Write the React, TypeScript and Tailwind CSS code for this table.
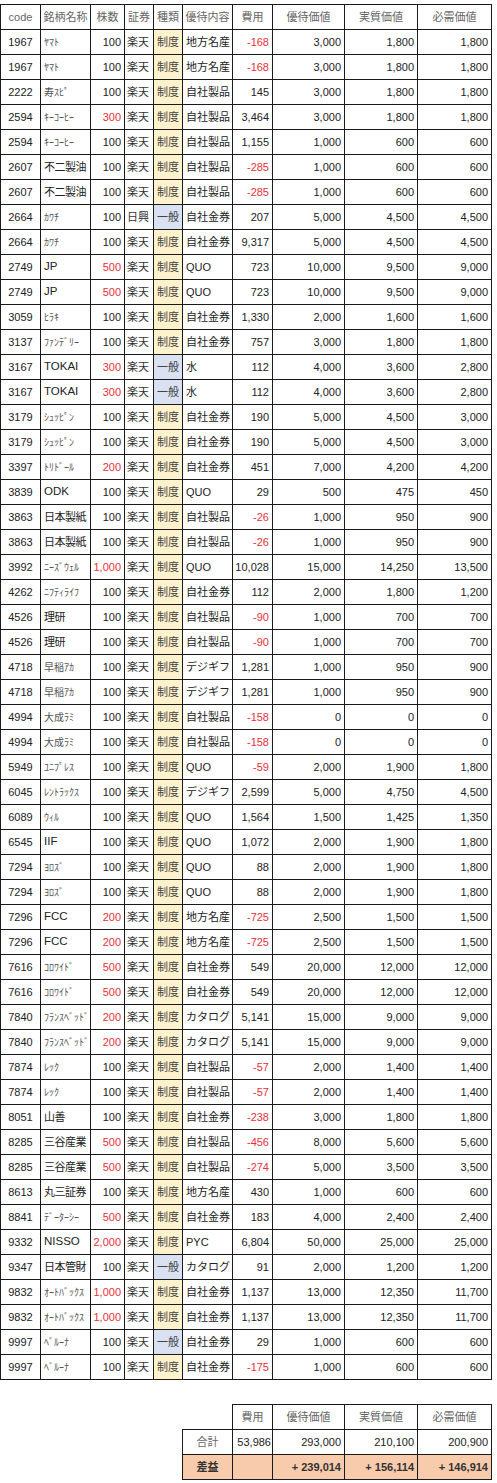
import React from "react";

type Row = [string, string, number, string, string, string, number, number, number, number];

const rows: Row[] = [
  ["1967", "ﾔﾏﾄ", 100, "楽天", "制度", "地方名産", -168, 3000, 1800, 1800],
  ["1967", "ﾔﾏﾄ", 100, "楽天", "制度", "地方名産", -168, 3000, 1800, 1800],
  ["2222", "寿ｽﾋﾟ", 100, "楽天", "制度", "自社製品", 145, 3000, 1800, 1800],
  ["2594", "ｷｰｺｰﾋｰ", 300, "楽天", "制度", "自社製品", 3464, 3000, 1800, 1800],
  ["2594", "ｷｰｺｰﾋｰ", 100, "楽天", "制度", "自社製品", 1155, 1000, 600, 600],
  ["2607", "不二製油", 100, "楽天", "制度", "自社製品", -285, 1000, 600, 600],
  ["2607", "不二製油", 100, "楽天", "制度", "自社製品", -285, 1000, 600, 600],
  ["2664", "ｶﾜﾁ", 100, "日興", "一般", "自社金券", 207, 5000, 4500, 4500],
  ["2664", "ｶﾜﾁ", 100, "楽天", "制度", "自社金券", 9317, 5000, 4500, 4500],
  ["2749", "JP", 500, "楽天", "制度", "QUO", 723, 10000, 9500, 9000],
  ["2749", "JP", 500, "楽天", "制度", "QUO", 723, 10000, 9500, 9000],
  ["3059", "ﾋﾗｷ", 100, "楽天", "制度", "自社金券", 1330, 2000, 1600, 1600],
  ["3137", "ﾌｧﾝﾃﾞﾘｰ", 100, "楽天", "制度", "自社金券", 757, 3000, 1800, 1800],
  ["3167", "TOKAI", 300, "楽天", "一般", "水", 112, 4000, 3600, 2800],
  ["3167", "TOKAI", 300, "楽天", "一般", "水", 112, 4000, 3600, 2800],
  ["3179", "ｼｭｯﾋﾟﾝ", 100, "楽天", "制度", "自社金券", 190, 5000, 4500, 3000],
  ["3179", "ｼｭｯﾋﾟﾝ", 100, "楽天", "制度", "自社金券", 190, 5000, 4500, 3000],
  ["3397", "ﾄﾘﾄﾞｰﾙ", 200, "楽天", "制度", "自社金券", 451, 7000, 4200, 4200],
  ["3839", "ODK", 100, "楽天", "制度", "QUO", 29, 500, 475, 450],
  ["3863", "日本製紙", 100, "楽天", "制度", "自社製品", -26, 1000, 950, 900],
  ["3863", "日本製紙", 100, "楽天", "制度", "自社製品", -26, 1000, 950, 900],
  ["3992", "ﾆｰｽﾞｳｪﾙ", 1000, "楽天", "制度", "QUO", 10028, 15000, 14250, 13500],
  ["4262", "ﾆﾌﾃｨﾗｲﾌ", 100, "楽天", "制度", "自社金券", 112, 2000, 1800, 1200],
  ["4526", "理研", 100, "楽天", "制度", "自社製品", -90, 1000, 700, 700],
  ["4526", "理研", 100, "楽天", "制度", "自社製品", -90, 1000, 700, 700],
  ["4718", "早稲ｱｶ", 100, "楽天", "制度", "デジギフ", 1281, 1000, 950, 900],
  ["4718", "早稲ｱｶ", 100, "楽天", "制度", "デジギフ", 1281, 1000, 950, 900],
  ["4994", "大成ﾗﾐ", 100, "楽天", "制度", "自社製品", -158, 0, 0, 0],
  ["4994", "大成ﾗﾐ", 100, "楽天", "制度", "自社製品", -158, 0, 0, 0],
  ["5949", "ﾕﾆﾌﾟﾚｽ", 100, "楽天", "制度", "QUO", -59, 2000, 1900, 1800],
  ["6045", "ﾚﾝﾄﾗｯｸｽ", 100, "楽天", "制度", "デジギフ", 2599, 5000, 4750, 4500],
  ["6089", "ｳｨﾙ", 100, "楽天", "制度", "QUO", 1564, 1500, 1425, 1350],
  ["6545", "IIF", 100, "楽天", "制度", "QUO", 1072, 2000, 1900, 1800],
  ["7294", "ﾖﾛｽﾞ", 100, "楽天", "制度", "QUO", 88, 2000, 1900, 1800],
  ["7294", "ﾖﾛｽﾞ", 100, "楽天", "制度", "QUO", 88, 2000, 1900, 1800],
  ["7296", "FCC", 200, "楽天", "制度", "地方名産", -725, 2500, 1500, 1500],
  ["7296", "FCC", 200, "楽天", "制度", "地方名産", -725, 2500, 1500, 1500],
  ["7616", "ｺﾛﾜｲﾄﾞ", 500, "楽天", "制度", "自社金券", 549, 20000, 12000, 12000],
  ["7616", "ｺﾛﾜｲﾄﾞ", 500, "楽天", "制度", "自社金券", 549, 20000, 12000, 12000],
  ["7840", "ﾌﾗﾝｽﾍﾞｯﾄﾞ", 200, "楽天", "制度", "カタログ", 5141, 15000, 9000, 9000],
  ["7840", "ﾌﾗﾝｽﾍﾞｯﾄﾞ", 200, "楽天", "制度", "カタログ", 5141, 15000, 9000, 9000],
  ["7874", "ﾚｯｸ", 100, "楽天", "制度", "自社製品", -57, 2000, 1400, 1400],
  ["7874", "ﾚｯｸ", 100, "楽天", "制度", "自社製品", -57, 2000, 1400, 1400],
  ["8051", "山善", 100, "楽天", "制度", "自社金券", -238, 3000, 1800, 1800],
  ["8285", "三谷産業", 500, "楽天", "制度", "自社製品", -456, 8000, 5600, 5600],
  ["8285", "三谷産業", 500, "楽天", "制度", "自社製品", -274, 5000, 3500, 3500],
  ["8613", "丸三証券", 100, "楽天", "制度", "地方名産", 430, 1000, 600, 600],
  ["8841", "ﾃﾞｰﾀｰｼｰ", 500, "楽天", "制度", "自社金券", 183, 4000, 2400, 2400],
  ["9332", "NISSO", 2000, "楽天", "制度", "PYC", 6804, 50000, 25000, 25000],
  ["9347", "日本管財", 100, "楽天", "一般", "カタログ", 91, 2000, 1200, 1200],
  ["9832", "ｵｰﾄﾊﾞｯｸｽ", 1000, "楽天", "制度", "自社金券", 1137, 13000, 12350, 11700],
  ["9832", "ｵｰﾄﾊﾞｯｸｽ", 1000, "楽天", "制度", "自社金券", 1137, 13000, 12350, 11700],
  ["9997", "ﾍﾞﾙｰﾅ", 100, "楽天", "一般", "自社金券", 29, 1000, 600, 600],
  ["9997", "ﾍﾞﾙｰﾅ", 100, "楽天", "制度", "自社金券", -175, 1000, 600, 600],
];

const headers = ["code", "銘柄名称", "株数", "証券", "種類", "優待内容", "費用", "優待価値", "実質価値", "必需価値"];

const fmt = (n: number) => n.toLocaleString("en-US");

const cell = "h-[25px] border-r border-b border-[#1a1a1a] flex items-center overflow-hidden whitespace-nowrap";
const red = "text-[#e8303a]";

function nameClass(name: string) {
  if (/[\uFF61-\uFF9F]/.test(name)) return "text-[10px] text-[#555]";
  if (/^[A-Za-z]+$/.test(name)) return "text-[11.5px] text-[#222]";
  return "text-[11px] tracking-[-0.5px] text-[#222]";
}

export default function App() {
  return (
    <div className="bg-white min-h-[1483px] pt-[4px] font-['Liberation_Sans','Noto_Sans_CJK_JP',sans-serif] text-[11px] text-[#222]">
      <div className="w-[492px] grid grid-cols-[40px_50px_34px_29px_29px_50px_40px_72px_73px_74px] border-t border-l border-[#1a1a1a]">
        {headers.map((h) => (
          <div key={h} className={`${cell} justify-center text-[#666] text-[11px]`}>
            {h}
          </div>
        ))}
        {rows.map((r, i) => (
          <React.Fragment key={i}>
            <div className={`${cell} justify-center`}>{r[0]}</div>
            <div className={`${cell} pl-[3px] ${nameClass(r[1])}`}>{r[1]}</div>
            <div className={`${cell} justify-end pr-[3px] ${r[2] !== 100 ? red : ""}`}>{fmt(r[2])}</div>
            <div className={`${cell} pl-[2px] text-[#333]`}>{r[3]}</div>
            <div
              className={`${cell} justify-center text-[#444] ${r[4] === "制度" ? "bg-[#fff2cc]" : "bg-[#d9e1f2]"}`}
            >
              {r[4]}
            </div>
            <div className={`${cell} pl-[3px]`}>{r[5]}</div>
            <div className={`${cell} justify-end pr-[3px] ${r[6] < 0 ? red : ""}`}>{fmt(r[6])}</div>
            <div className={`${cell} justify-end pr-[3px]`}>{fmt(r[7])}</div>
            <div className={`${cell} justify-end pr-[3px]`}>{fmt(r[8])}</div>
            <div className={`${cell} justify-end pr-[3px]`}>{fmt(r[9])}</div>
          </React.Fragment>
        ))}
      </div>

      <div className="mt-[24px] pl-[182px]">
        <div className="grid grid-cols-[51px_40px_72px_73px_74px]">
          <div className="h-[26px] border-r border-b border-[#1a1a1a]" />
          {["費用", "優待価値", "実質価値", "必需価値"].map((h) => (
            <div key={h} className={`${cell} h-[26px] border-t justify-center text-[#666]`}>
              {h}
            </div>
          ))}

          <div className={`${cell} border-l justify-center text-[#666]`}>合計</div>
          <div className={`${cell} justify-end pr-[1px]`}>53,986</div>
          <div className={`${cell} justify-end pr-[3px]`}>293,000</div>
          <div className={`${cell} justify-end pr-[3px]`}>210,100</div>
          <div className={`${cell} justify-end pr-[3px]`}>200,900</div>

          <div className={`${cell} border-l justify-center bg-[#f8cbad] font-bold text-[#333]`}>差益</div>
          <div className={`${cell} bg-[#f8cbad]`} />
          <div className={`${cell} justify-end pr-[3px] bg-[#f8cbad] font-bold text-[#333]`}>+ 239,014</div>
          <div className={`${cell} justify-end pr-[3px] bg-[#f8cbad] font-bold text-[#333]`}>+ 156,114</div>
          <div className={`${cell} justify-end pr-[3px] bg-[#f8cbad] font-bold text-[#333]`}>+ 146,914</div>
        </div>
      </div>
    </div>
  );
}
